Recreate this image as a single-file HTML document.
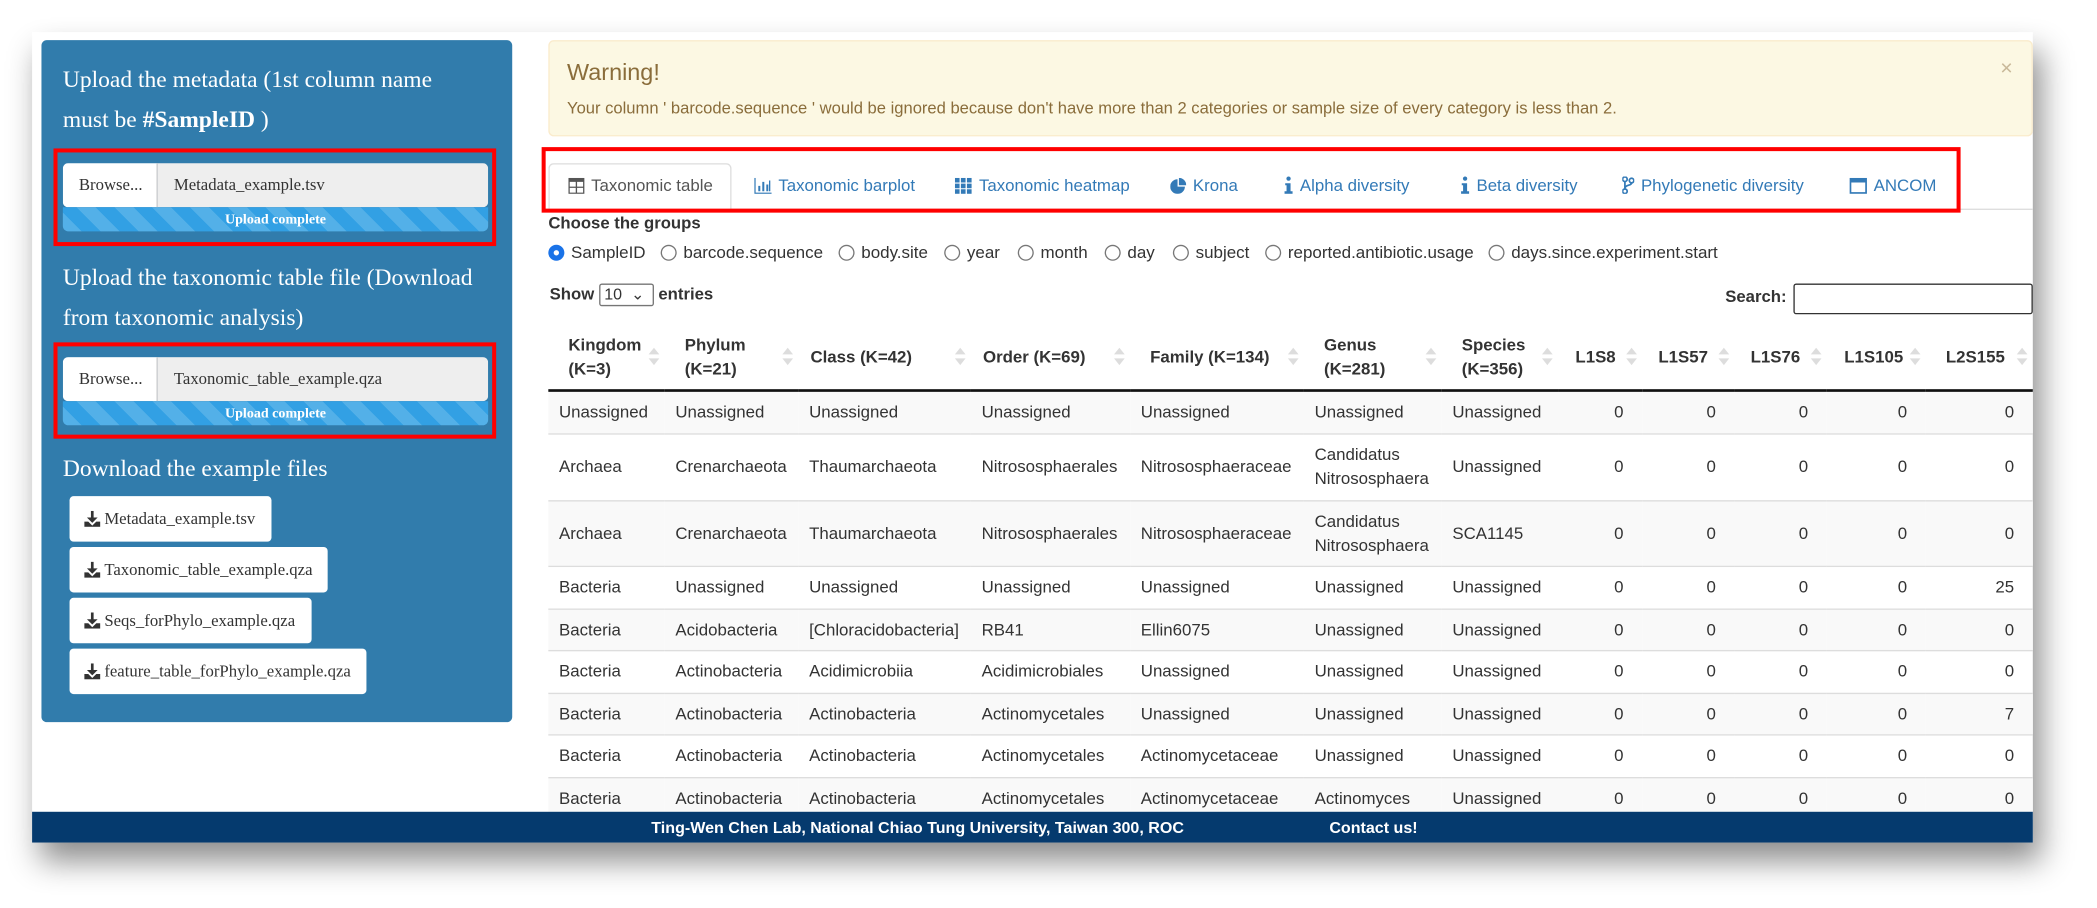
<!DOCTYPE html>
<html><head><meta charset="utf-8"><style>
*{box-sizing:border-box;margin:0;padding:0}
html,body{width:2097px;height:908px;overflow:hidden;background:#fff}
#w{position:absolute;left:0;top:0;width:1568px;height:679px;transform:scale(1.33737);transform-origin:0 0;font-family:"Liberation Sans",Arial,sans-serif}
.a{position:absolute}
#page{left:24px;top:24px;width:1496px;height:606px;background:#fff;box-shadow:6px 14px 22px rgba(0,0,0,.45)}
#side{left:31px;top:30px;width:352px;height:510px;background:#317cac;border-radius:4px}
.h{position:absolute;left:47px;color:#fff;font-family:"Liberation Serif",serif;font-size:17.6px;line-height:30px}
.red{position:absolute;border:3px solid #f00}
.fi{position:absolute;left:47px;width:318px;height:33px;border-radius:4px;overflow:hidden;font-family:"Liberation Serif",serif;font-size:12.5px;color:#333}
.fi .b{position:absolute;left:0;top:0;width:71px;height:33px;background:#fff;line-height:33px;padding-left:12px;border-right:1px solid #ccc}
.fi .t{position:absolute;left:71px;top:0;right:0;height:33px;background:#eee;line-height:33px;padding-left:12px}
.pb{position:absolute;left:47px;width:318px;height:18px;border-radius:0 0 4px 4px;background:repeating-linear-gradient(45deg,#53b0e8 0 10px,#32a0e4 10px 20px);color:#fff;font-family:"Liberation Serif",serif;font-weight:bold;font-size:10.5px;text-align:center;line-height:19px}
.db{position:absolute;left:52px;height:34px;background:#fff;border-radius:3px;font-family:"Liberation Serif",serif;font-size:12.5px;color:#333;line-height:34px;padding-left:11px}
.db svg{vertical-align:-2px;margin-right:3px}
#warn{left:410px;top:30px;width:1110px;height:72px;background:#fcf8e3;border:1px solid #faebcc;border-radius:4px;color:#8a6d3b}
.tab{position:absolute;top:131px;font-size:12.6px;color:#337ab7;line-height:16px}
.tab svg{vertical-align:-2px;margin-right:5px}
.rad{position:absolute;top:182px;font-size:12.7px;color:#333;line-height:14px}
.rad i{display:inline-block;width:12px;height:12px;border:1px solid #777;border-radius:50%;vertical-align:-2px;margin-right:5px}
table{position:absolute;left:410px;top:243px;border-collapse:collapse;table-layout:fixed;width:1110px;font-size:12.6px;color:#333}
th{font-weight:bold;text-align:left;padding:0 8px;height:49px;line-height:18px;border-bottom:2px solid #111;position:relative;vertical-align:middle}
th:after{content:"";position:absolute;right:4px;top:50%;margin-top:-7px;width:0;height:0;border-left:4px solid transparent;border-right:4px solid transparent;border-bottom:5px solid #ddd}
th:before{content:"";position:absolute;right:4px;top:50%;margin-top:1px;width:0;height:0;border-left:4px solid transparent;border-right:4px solid transparent;border-top:5px solid #ddd}
td{padding:0 8px;border-top:1px solid #ddd;line-height:18px;vertical-align:middle}
tr.o td{background:#f9f9f9}
td.n{text-align:right;padding-right:14px}
#foot{left:24px;top:607px;width:1496px;height:23px;background:#053a6e;color:#fff;font-weight:bold;font-size:12px;line-height:24px}
</style></head><body><div id="w">
<div id="page" class="a"></div>
<div id="side" class="a"></div>
<div class="h" style="top:44px">Upload the metadata (1st column name<br>must be <b>#SampleID</b> )</div>
<div class="red" style="left:40px;top:111px;width:331px;height:73px"></div>
<div class="fi" style="top:122px"><div class="b">Browse...</div><div class="t">Metadata_example.tsv</div></div>
<div class="pb" style="top:155px">Upload complete</div>
<div class="h" style="top:192px">Upload the taxonomic table file (Download<br>from taxonomic analysis)</div>
<div class="red" style="left:40px;top:256px;width:331px;height:72px"></div>
<div class="fi" style="top:267px"><div class="b">Browse...</div><div class="t">Taxonomic_table_example.qza</div></div>
<div class="pb" style="top:300px">Upload complete</div>
<div class="h" style="top:335px">Download the example files</div>
<div class="db" style="top:371px;width:151px"><svg width="12" height="12" viewBox="0 0 12 12"><path d="M5 0h2v5h3L6 9 2 5h3z" fill="#333"/><path d="M0 8h3l3 3 3-3h3v4H0z" fill="#333"/></svg>Metadata_example.tsv</div>
<div class="db" style="top:409px;width:193px"><svg width="12" height="12" viewBox="0 0 12 12"><path d="M5 0h2v5h3L6 9 2 5h3z" fill="#333"/><path d="M0 8h3l3 3 3-3h3v4H0z" fill="#333"/></svg>Taxonomic_table_example.qza</div>
<div class="db" style="top:447px;width:181px"><svg width="12" height="12" viewBox="0 0 12 12"><path d="M5 0h2v5h3L6 9 2 5h3z" fill="#333"/><path d="M0 8h3l3 3 3-3h3v4H0z" fill="#333"/></svg>Seqs_forPhylo_example.qza</div>
<div class="db" style="top:485px;width:222px"><svg width="12" height="12" viewBox="0 0 12 12"><path d="M5 0h2v5h3L6 9 2 5h3z" fill="#333"/><path d="M0 8h3l3 3 3-3h3v4H0z" fill="#333"/></svg>feature_table_forPhylo_example.qza</div>

<div id="warn" class="a"><div class="a" style="left:13px;top:13px;font-size:17.5px">Warning!</div>
<div class="a" style="left:13px;top:43px;font-size:12.4px">Your column ' barcode.sequence ' would be ignored because don't have more than 2 categories or sample size of every category is less than 2.</div>
<div class="a" style="right:14px;top:12px;font-size:16px;color:#c9b99a">×</div></div>

<div class="a" style="left:410px;top:156px;width:1110px;height:1px;background:#ddd"></div>
<div class="a" style="left:410px;top:122px;width:137px;height:35px;background:#fff;border:1px solid #ddd;border-bottom:none;border-radius:4px 4px 0 0"></div>
<div class="red" style="left:405px;top:110px;width:1061px;height:49px"></div>
<div class="tab" style="left:425px;color:#555"><svg width="12" height="12" viewBox="0 0 12 12"><path d="M0 0h12v12H0z" fill="#555"/><path d="M1 3h4.5v3.5H1zM6.5 3H11v3.5H6.5zM1 7.5h4.5V11H1zM6.5 7.5H11V11H6.5z" fill="#fff"/></svg>Taxonomic table</div>
<div class="tab" style="left:564px"><svg width="13" height="12" viewBox="0 0 13 12"><path d="M0 0h1v11h12v1H0zM3 6h1.5v4H3zM6 3h1.5v7H6zM9 5h1.5v5H9zM11 2h1v8h-1z" fill="#337ab7"/></svg>Taxonomic barplot</div>
<div class="tab" style="left:714px"><svg width="13" height="12" viewBox="0 0 13 12"><path d="M0 0h3.5v3.5H0zM4.5 0H8v3.5H4.5zM9 0h3.5v3.5H9zM0 4.3h3.5v3.5H0zM4.5 4.3H8v3.5H4.5zM9 4.3h3.5v3.5H9zM0 8.5h3.5V12H0zM4.5 8.5H8V12H4.5zM9 8.5h3.5V12H9z" fill="#337ab7"/></svg>Taxonomic heatmap</div>
<div class="tab" style="left:875px"><svg width="12" height="12" viewBox="0 0 12 12"><path d="M5.5 1A5.5 5.5 0 1 0 11 6.5H5.5z" fill="#337ab7"/><path d="M6.5 0v5.5H12A5.5 5.5 0 0 0 6.5 0z" fill="#337ab7"/></svg>Krona</div>
<div class="tab" style="left:960px"><svg width="7" height="13" viewBox="0 0 7 13"><circle cx="3.5" cy="1.6" r="1.6" fill="#337ab7"/><path d="M1 5h4v6h1.5v2h-6v-2H2V6.5H1z" fill="#337ab7"/></svg>Alpha diversity</div>
<div class="tab" style="left:1092px"><svg width="7" height="13" viewBox="0 0 7 13"><circle cx="3.5" cy="1.6" r="1.6" fill="#337ab7"/><path d="M1 5h4v6h1.5v2h-6v-2H2V6.5H1z" fill="#337ab7"/></svg>Beta diversity</div>
<div class="tab" style="left:1213px"><svg width="9" height="13" viewBox="0 0 9 13"><circle cx="2" cy="2" r="1.7" fill="none" stroke="#337ab7" stroke-width="1.3"/><circle cx="2" cy="11" r="1.7" fill="none" stroke="#337ab7" stroke-width="1.3"/><circle cx="7" cy="3" r="1.7" fill="none" stroke="#337ab7" stroke-width="1.3"/><path d="M2 3.7v5.6M7 4.7C7 7 2 6 2 9" stroke="#337ab7" stroke-width="1.3" fill="none"/></svg>Phylogenetic diversity</div>
<div class="tab" style="left:1383px"><svg width="13" height="12" viewBox="0 0 13 12"><path d="M0 0h13v12H0z" fill="#337ab7"/><path d="M1.3 3.5h10.4v7.2H1.3z" fill="#fff"/></svg>ANCOM</div>

<div class="a" style="left:410px;top:160px;font-size:12.5px;font-weight:bold;color:#333">Choose the groups</div>
<div class="rad" style="left:410px"><i style="border:4px solid #1a73e8"></i>SampleID</div>
<div class="rad" style="left:494px"><i></i>barcode.sequence</div>
<div class="rad" style="left:627px"><i></i>body.site</div>
<div class="rad" style="left:706px"><i></i>year</div>
<div class="rad" style="left:761px"><i></i>month</div>
<div class="rad" style="left:826px"><i></i>day</div>
<div class="rad" style="left:877px"><i></i>subject</div>
<div class="rad" style="left:946px"><i></i>reported.antibiotic.usage</div>
<div class="rad" style="left:1113px"><i></i>days.since.experiment.start</div>

<div class="a" style="left:411px;top:212px;font-size:12.5px;font-weight:bold;color:#333;line-height:16px">Show <span style="display:inline-block;width:41px;height:17px;border:1px solid #767676;border-radius:2px;font-weight:normal;vertical-align:middle;line-height:15px;padding-left:3px;font-size:12px">10 &nbsp;⌄</span> entries</div>
<div class="a" style="left:1290px;top:215px;font-size:12.5px;font-weight:bold;color:#333">Search:</div>
<div class="a" style="left:1341px;top:212px;width:179px;height:23px;border:1.5px solid #333;border-radius:2px;background:#fff"></div>

<table>
<colgroup><col style="width:87px"><col style="width:100px"><col style="width:129px"><col style="width:119px"><col style="width:130px"><col style="width:103px"><col style="width:87px"><col style="width:63px"><col style="width:69px"><col style="width:69px"><col style="width:74px"><col style="width:80px"></colgroup>
<tr><th style="padding-left:15px">Kingdom<br>(K=3)</th><th style="padding-left:15px">Phylum<br>(K=21)</th><th style="padding-left:9px">Class (K=42)</th><th style="padding-left:9px">Order (K=69)</th><th style="padding-left:15px">Family (K=134)</th><th style="padding-left:15px">Genus<br>(K=281)</th><th style="padding-left:15px">Species<br>(K=356)</th><th style="padding-left:13px">L1S8</th><th style="padding-left:12px">L1S57</th><th style="padding-left:12px">L1S76</th><th style="padding-left:13px">L1S105</th><th style="padding-left:15px">L2S155</th></tr>
<tr class="o" style="height:32px"><td>Unassigned</td><td>Unassigned</td><td>Unassigned</td><td>Unassigned</td><td>Unassigned</td><td>Unassigned</td><td>Unassigned</td><td class="n">0</td><td class="n">0</td><td class="n">0</td><td class="n">0</td><td class="n">0</td></tr>
<tr style="height:50px"><td>Archaea</td><td>Crenarchaeota</td><td>Thaumarchaeota</td><td>Nitrososphaerales</td><td>Nitrososphaeraceae</td><td>Candidatus Nitrososphaera</td><td>Unassigned</td><td class="n">0</td><td class="n">0</td><td class="n">0</td><td class="n">0</td><td class="n">0</td></tr>
<tr class="o" style="height:49px"><td>Archaea</td><td>Crenarchaeota</td><td>Thaumarchaeota</td><td>Nitrososphaerales</td><td>Nitrososphaeraceae</td><td>Candidatus Nitrososphaera</td><td>SCA1145</td><td class="n">0</td><td class="n">0</td><td class="n">0</td><td class="n">0</td><td class="n">0</td></tr>
<tr style="height:32px"><td>Bacteria</td><td>Unassigned</td><td>Unassigned</td><td>Unassigned</td><td>Unassigned</td><td>Unassigned</td><td>Unassigned</td><td class="n">0</td><td class="n">0</td><td class="n">0</td><td class="n">0</td><td class="n">25</td></tr>
<tr class="o" style="height:31px"><td>Bacteria</td><td>Acidobacteria</td><td>[Chloracidobacteria]</td><td>RB41</td><td>Ellin6075</td><td>Unassigned</td><td>Unassigned</td><td class="n">0</td><td class="n">0</td><td class="n">0</td><td class="n">0</td><td class="n">0</td></tr>
<tr style="height:32px"><td>Bacteria</td><td>Actinobacteria</td><td>Acidimicrobiia</td><td>Acidimicrobiales</td><td>Unassigned</td><td>Unassigned</td><td>Unassigned</td><td class="n">0</td><td class="n">0</td><td class="n">0</td><td class="n">0</td><td class="n">0</td></tr>
<tr class="o" style="height:31px"><td>Bacteria</td><td>Actinobacteria</td><td>Actinobacteria</td><td>Actinomycetales</td><td>Unassigned</td><td>Unassigned</td><td>Unassigned</td><td class="n">0</td><td class="n">0</td><td class="n">0</td><td class="n">0</td><td class="n">7</td></tr>
<tr style="height:32px"><td>Bacteria</td><td>Actinobacteria</td><td>Actinobacteria</td><td>Actinomycetales</td><td>Actinomycetaceae</td><td>Unassigned</td><td>Unassigned</td><td class="n">0</td><td class="n">0</td><td class="n">0</td><td class="n">0</td><td class="n">0</td></tr>
<tr class="o" style="height:32px"><td>Bacteria</td><td>Actinobacteria</td><td>Actinobacteria</td><td>Actinomycetales</td><td>Actinomycetaceae</td><td>Actinomyces</td><td>Unassigned</td><td class="n">0</td><td class="n">0</td><td class="n">0</td><td class="n">0</td><td class="n">0</td></tr>
</table>

<div id="foot" class="a"><span class="a" style="left:463px">Ting-Wen Chen Lab, National Chiao Tung University, Taiwan 300, ROC</span><span class="a" style="left:970px">Contact us!</span></div>
</div></body></html>
